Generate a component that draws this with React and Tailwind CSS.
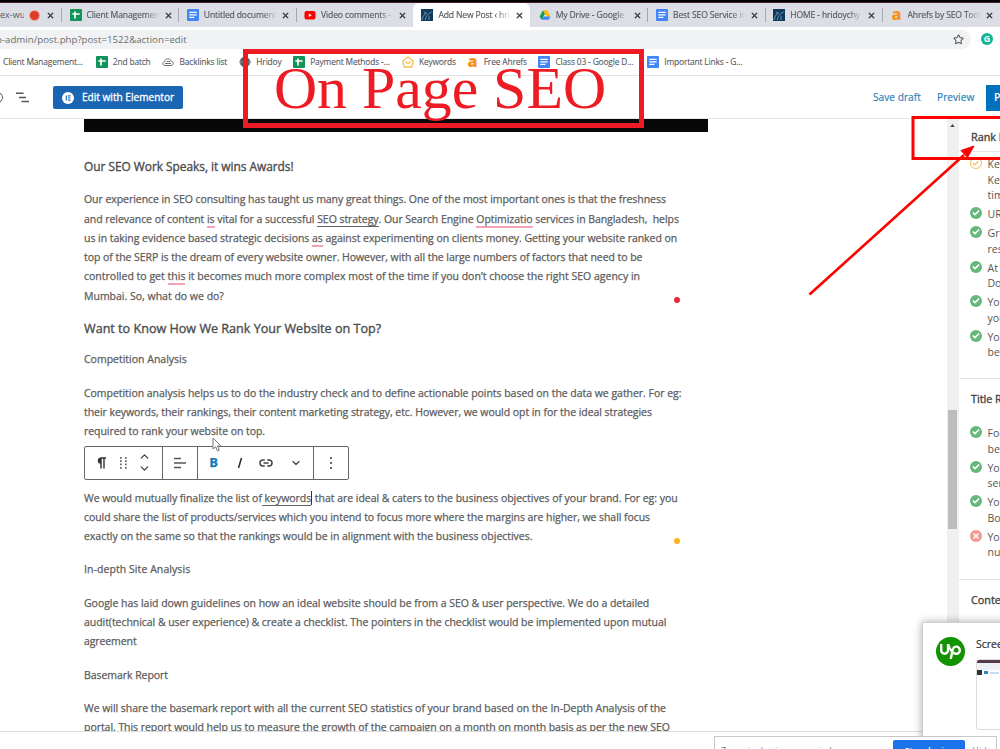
import React from 'react';
import { X, Star, ChevronUp, ChevronDown, Check, Globe } from 'lucide-react';
import { SiUpwork } from 'react-icons/si';

const SheetIcon = () => (
  <svg viewBox="0 0 12 12" className="w-3 h-3 shrink-0">
    <rect width="12" height="12" rx="1" fill="#10945a" />
    <path d="M5 2.5v7M2.3 5h7.4" stroke="#fff" strokeWidth="1.7" />
  </svg>
);

const DocIcon = () => (
  <svg viewBox="0 0 12 12" className="w-3 h-3 shrink-0">
    <rect width="12" height="12" rx="1" fill="#4285f4" />
    <path d="M2.3 3.3h7.4M2.3 5.8h7.4M2.3 8.4h5" stroke="#fff" strokeWidth="1.2" />
  </svg>
);

const YoutubeIcon = () => (
  <svg viewBox="0 0 12 12" className="w-3 h-3 shrink-0">
    <rect x="0.5" y="2" width="11" height="8.4" rx="2" fill="#f00" />
    <path d="M4.8 4.4v3.6l3-1.8z" fill="#fff" />
  </svg>
);

const SiteIcon = () => (
  <svg viewBox="0 0 12 12" className="w-3 h-3 shrink-0">
    <rect width="12" height="12" fill="#123a5c" />
    <path d="M1 11c1-4 2-6 5-7M4.5 11c0-3 2-6 6-8M3 4l2-1M8 11V7" stroke="#6fa0bd" strokeWidth="0.9" fill="none" />
  </svg>
);

const DriveIcon = () => (
  <svg viewBox="0 0 12 12" className="w-3 h-3 shrink-0">
    <path d="M4 1.2L.6 7.4l1.9 3.3L6 4.6z" fill="#0f9d58" />
    <path d="M4 1.2h4l3.5 6.2h-4z" fill="#fbbc04" />
    <path d="M2.5 10.7l1.9-3.3h7.1l-1.9 3.3z" fill="#4285f4" />
  </svg>
);

const AhrefsIcon = () => (
  <span className="w-3 h-3 shrink-0 flex items-center justify-center font-['Open_Sans',sans-serif] font-extrabold text-[16px] leading-none text-[#f7931e] pb-[3px]">a</span>
);

const CloudIcon = () => (
  <svg viewBox="0 0 12 12" className="w-3 h-3 shrink-0" fill="none" stroke="#707070">
    <path d="M3 9.5C.2 9.4.2 6 2.6 5.6 3 2 8.5 2 9 5.2c3 .2 2.7 4.2.2 4.3z" />
    <path d="M3 7.5h6M4.5 5.6h3.5" />
  </svg>
);

const KeywordIcon = () => (
  <svg viewBox="0 0 12 12" className="w-3 h-3 shrink-0" fill="none" stroke="#f5c352" strokeWidth="1.3">
    <path d="M6 .9l5.1 3.9-1.3 6.2H2.2L.9 4.8z" strokeLinejoin="round" />
    <path d="M3.2 5.5L6 7.8l2.8-2.3" />
  </svg>
);

const tabs = [
  { icon: <SheetIcon />, title: 'Client Managemen' },
  { icon: <DocIcon />, title: 'Untitled document' },
  { icon: <YoutubeIcon />, title: 'Video comments -' },
  { icon: <SiteIcon />, title: 'Add New Post ‹ hri', active: true },
  { icon: <DriveIcon />, title: 'My Drive - Google' },
  { icon: <DocIcon />, title: 'Best SEO Service in' },
  { icon: <SiteIcon />, title: 'HOME - hridoychy' },
  { icon: <AhrefsIcon />, title: 'Ahrefs by SEO Tool' },
];

const bookmarks = [
  { icon: <SheetIcon />, title: '2nd batch', width: 'w-[38px]' },
  { icon: <CloudIcon />, title: 'Backlinks list', width: 'w-[48px]' },
  { icon: <Globe size={12} fill="#555" color="#888" />, title: 'Hridoy', width: 'w-[25px]' },
  { icon: <SheetIcon />, title: 'Payment Methods -...', width: 'w-[80px]' },
  { icon: <KeywordIcon />, title: 'Keywords', width: 'w-[36px]' },
  { icon: <AhrefsIcon />, title: 'Free Ahrefs', width: 'w-[43px]' },
  { icon: <DocIcon />, title: 'Class 03 - Google D...', width: 'w-[80px]' },
  { icon: <DocIcon />, title: 'Important Links - G...', width: 'w-[80px]' },
];

const rankChecks = [
  { status: 'warn', lines: ['Key', 'Key', 'tim'] },
  { status: 'ok', lines: ['UR'] },
  { status: 'ok', lines: ['Gre', 'res'] },
  { status: 'ok', lines: ['At', 'Do'] },
  { status: 'ok', lines: ['You', 'you'] },
  { status: 'ok', lines: ['You', 'be'] },
];

const titleChecks = [
  { status: 'ok', lines: ['Foc', 'be'] },
  { status: 'ok', lines: ['You', 'sen'] },
  { status: 'ok', lines: ['You', 'Boo'] },
  { status: 'bad', lines: ['You', 'nu'] },
];

const Tab = ({ icon, title, active }) => (
  <div className={`relative w-[117.3px] h-full shrink-0 flex items-center pl-[8.5px] ${active ? 'bg-white rounded-t-md' : ''}`}>
    {icon}
    <span className="ml-[5px] w-[73px] overflow-hidden whitespace-nowrap text-[8.6px] tracking-[-0.15px] text-[#55585d] [-webkit-text-stroke:0.15px] [mask-image:linear-gradient(to_right,#000_80%,transparent)]">{title}</span>
    <X size={9} strokeWidth={3.5} className="ml-[4px] text-[#3c4043]" />
  </div>
);

const Divider = () => <div className="w-px h-[14px] -mr-px bg-[#a5a8b0] shrink-0" />;

const StatusIcon = ({ status }) => {
  if (status === 'warn') {
    return (
      <span className="w-[12px] h-[12px] shrink-0 rounded-full border-[1.5px] border-[#f7b75a] flex items-center justify-center">
        <Check size={7} strokeWidth={4} className="text-[#f7b75a]" />
      </span>
    );
  }
  return (
    <span className={`w-[12px] h-[12px] shrink-0 rounded-full flex items-center justify-center ${status === 'ok' ? 'bg-[#66b77b]' : 'bg-[#f19a94]'}`}>
      {status === 'ok' ? <Check size={8} strokeWidth={5} className="text-white" /> : <X size={8} strokeWidth={5} className="text-white" />}
    </span>
  );
};

const CheckList = ({ items }) => (
  <ul className="flex flex-col gap-[3.4px] pl-[10.5px]">
    {items.map((item, i) => (
      <li key={i} className="flex gap-[6px] text-[10.5px] leading-[15.6px] text-[#555]">
        <StatusIcon status={item.status} />
        <div className="whitespace-nowrap">
          {item.lines.map((line, j) => <div key={j}>{line}</div>)}
        </div>
      </li>
    ))}
  </ul>
);

const PanelTitle = ({ children }) => (
  <h4 className="pl-[12px] pt-[11px] text-[10.8px] leading-[17px] text-[#444] [-webkit-text-stroke:0.35px] whitespace-nowrap">{children}</h4>
);

const Line = ({ className = 'tracking-[-0.05px]', children }) => (
  <div className={`whitespace-pre w-max ${className}`}>{children}</div>
);

const Flag = ({ children }) => <span className="border-b-2 border-[#f4a3b5]">{children}</span>;

const Toolbar = () => (
  <div className="mt-[4.5px] w-[264.5px] h-[34px] flex items-center border border-[#666] rounded-[2px] text-[#444] bg-white">
    <div className="w-[77.5px] h-full flex items-center border-r border-[#666] pl-[10px]">
      <svg viewBox="0 0 12 12" className="w-[12px] h-[12px]">
        <path d="M5.5 1H11M6 1v10.5M9 1v10.5" stroke="#333" strokeWidth="1.4" />
        <path d="M6 .4a3.2 3.2 0 0 0 0 6.4z" fill="#333" />
      </svg>
      <svg viewBox="0 0 8 12" className="w-[8px] h-[12px] ml-[13px]" fill="#666">
        <path d="M0 0h1.7v1.7H0zM5 0h1.7v1.7H5zM0 3.3h1.7v1.7H0zM5 3.3h1.7v1.7H5zM0 6.6h1.7v1.7H0zM5 6.6h1.7v1.7H5zM0 10h1.7v1.7H0zM5 10h1.7v1.7H5z" />
      </svg>
      <div className="ml-[10px] flex flex-col gap-[3px]">
        <ChevronUp size={13} strokeWidth={2.5} className="-my-[2px]" />
        <ChevronDown size={13} strokeWidth={2.5} className="-my-[2px]" />
      </div>
    </div>
    <div className="w-[35px] h-full flex items-center justify-center border-r border-[#666]">
      <svg viewBox="0 0 12 12" className="w-[12px] h-[12px]" stroke="#555" strokeWidth="1.5"><path d="M0 1.5h7M0 6h12M0 10.5h7" /></svg>
    </div>
    <div className="w-[116px] h-full flex items-center border-r border-[#666] pl-[11px]">
      <span className="w-[10px] text-center text-[13px] leading-none font-bold text-[#1277b5]">B</span>
      <svg viewBox="0 0 8 12" className="w-[8px] h-[12px] ml-[17px]" stroke="#333" strokeWidth="1.6"><path d="M5.5 1L2.5 11" /></svg>
      <svg viewBox="0 0 14 8" className="w-[14px] h-[8px] ml-[15px]" fill="none" stroke="#444" strokeWidth="1.5">
        <path d="M5.8 1H4a3 3 0 0 0 0 6h1.800M8.2 1H10a3 3 0 0 1 0 6H8.2M4.5 4h5" />
      </svg>
      <ChevronDown size={12} strokeWidth={2.5} className="ml-[17px]" />
    </div>
    <div className="flex-1 flex justify-center">
      <svg viewBox="0 0 2 12" className="w-[2px] h-[12px]" fill="#666"><path d="M0 0h2v2H0zM0 5h2v2H0zM0 10h2v2H0z" /></svg>
    </div>
  </div>
);

const Article = () => (
  <article className="pl-[84px] font-['Open_Sans',sans-serif] text-[10.5px] leading-[19.25px] text-[#5c5c5c] [-webkit-text-stroke:0.25px]">
    <div className="w-[624px] h-[13px] bg-[#080808]" />
    <h3 className="mt-[25px] text-[11.9px] text-[#4c4c4c] [-webkit-text-stroke:0.35px]">
      <Line className="tracking-[-0.02px]">Our SEO Work Speaks, it wins Awards!</Line>
    </h3>
    <div className="mt-[14.2px]">
      <Line>Our experience in SEO consulting has taught us many great things. One of the most important ones is that the freshness</Line>
      <Line>and relevance of content <Flag>is</Flag> vital for a successful <span className="border-b border-[#666]">SEO strategy</span>. Our Search Engine <Flag>Optimizatio</Flag> services in Bangladesh,  helps</Line>
      <Line className="tracking-[-0.04px]">us in taking evidence based strategic decisions <Flag>as</Flag> against experimenting on clients money. Getting your website ranked on</Line>
      <Line>top of the SERP is the dream of every website owner. However, with all the large numbers of factors that need to be</Line>
      <Line className="tracking-[0.01px]">controlled to get <Flag>this</Flag> it becomes much more complex most of the time if you don’t choose the right SEO agency in</Line>
      <div className="flex items-center w-[596px]">
        <Line className="tracking-normal">Mumbai. So, what do we do?</Line>
        <span className="ml-auto mt-[8px] w-[6px] h-[6px] rounded-full bg-[#ec2a3b]" />
      </div>
    </div>
    <h2 className="mt-[13px] text-[12.6px] text-[#4c4c4c] [-webkit-text-stroke:0.35px]">
      <Line className="tracking-normal">Want to Know How We Rank Your Website on Top?</Line>
    </h2>
    <div className="mt-[12px]"><Line className="tracking-normal">Competition Analysis</Line></div>
    <div className="mt-[14.2px]">
      <Line className="tracking-[-0.035px]">Competition analysis helps us to do the industry check and to define actionable points based on the data we gather. For eg:</Line>
      <Line>their keywords, their rankings, their content marketing strategy, etc. However, we would opt in for the ideal strategies</Line>
      <Line>required to rank your website on top.</Line>
    </div>
    <Toolbar />
    <div className="mt-[8.7px]">
      <Line className="tracking-[-0.035px]">We would mutually finalize the list of<span className="border-b border-[#666]"> keywords</span><span className="border-l border-[#333]"> that are ideal &amp; caters to the business objectives of your brand. For eg: you</span></Line>
      <Line className="tracking-[-0.06px]">could share the list of products/services which you intend to focus more where the margins are higher, we shall focus</Line>
      <div className="flex items-center w-[596px]">
        <Line className="tracking-[-0.03px]">exactly on the same so that the rankings would be in alignment with the business objectives.</Line>
        <span className="ml-auto mt-[8px] w-[6px] h-[6px] rounded-full bg-[#fab41d]" />
      </div>
    </div>
    <div className="mt-[14px]"><Line className="tracking-[0.07px]">In-depth Site Analysis</Line></div>
    <div className="mt-[14.2px]">
      <Line className="tracking-[-0.025px]">Google has laid down guidelines on how an ideal website should be from a SEO &amp; user perspective. We do a detailed</Line>
      <Line className="tracking-[-0.045px]">audit(technical &amp; user experience) &amp; create a checklist. The pointers in the checklist would be implemented upon mutual</Line>
      <Line className="tracking-[-0.1px]">agreement</Line>
    </div>
    <div className="mt-[14.2px]"><Line>Basemark Report</Line></div>
    <div className="mt-[14.2px]">
      <Line className="tracking-[-0.04px]">We will share the basemark report with all the current SEO statistics of your brand based on the In-Depth Analysis of the</Line>
      <Line className="tracking-[-0.045px]">portal. This report would help us to measure the growth of the campaign on a month on month basis as per the new SEO</Line>
    </div>
  </article>
);

const App = () => {
  return (
    <div className="relative w-[1000px] h-[749px] overflow-hidden bg-white font-['Open_Sans',sans-serif] flex flex-col">
      <div className="h-[3px] bg-black border-b border-[#4a1c33] shrink-0" />

      <div className="h-[24px] shrink-0 bg-[#dcdee6] flex items-center">
        <div className="w-[61px] shrink-0 flex items-center text-[9px] text-[#55585d] whitespace-nowrap">
          <span className="w-[24px] overflow-hidden shrink-0">ex-wu</span>
          <span className="ml-[6px] w-[9px] h-[9px] rounded-full bg-[#dd3e2a] ring-1 ring-[#eaa69c] shrink-0" />
          <X size={9} strokeWidth={3.5} className="ml-[7px] text-[#3c4043] shrink-0" />
        </div>
        {tabs.map((tab, i) => (
          <React.Fragment key={tab.title}>
            {i !== 3 && i !== 4 && <Divider />}
            <Tab {...tab} />
          </React.Fragment>
        ))}
      </div>

      <div className="h-[23px] shrink-0 flex items-center">
        <div className="w-[971px] h-[19px] mt-[2px] rounded-r-full bg-[#f0f2f4] flex items-center justify-between pr-[7px] text-[9.7px] text-[#6b6e72]">
          <span className="whitespace-nowrap -ml-[4px] mt-[1px]">p-admin/post.php?post=1522&amp;action=edit</span>
          <Star size={11} strokeWidth={2.2} className="text-[#555]" />
        </div>
        <div className="ml-[10px] w-[12px] h-[12px] rounded-full bg-[#15b392] text-white text-[9px] leading-[12px] font-bold text-center">G</div>
      </div>

      <div className="h-[26px] shrink-0 border-b border-[#e4e4e6] flex items-center gap-[11.6px] text-[8.4px] tracking-[-0.15px] text-[#55585d] [-webkit-text-stroke:0.1px]">
        <span className="pl-[3px] w-[84px] shrink-0 whitespace-nowrap">Client Management...</span>
        {bookmarks.map((b) => (
          <div key={b.title} className="flex items-center gap-[5.2px] shrink-0">
            {b.icon}
            <span className={`whitespace-nowrap ${b.width}`}>{b.title}</span>
          </div>
        ))}
      </div>

      <div className="h-[43px] shrink-0 border-b border-[#e6e6e6] flex items-center pt-[1px] text-[10.5px]">
        <span className="-ml-[8px] w-[11px] h-[11px] shrink-0 rounded-full border-[1.5px] border-[#555]" />
        <svg viewBox="0 0 13 11" className="ml-[13px] w-[13px] h-[11px] shrink-0" stroke="#555" strokeWidth="1.5"><path d="M0 1.2h7.5M3 5.4h7M5.5 9.6H13" /></svg>
        <div className="ml-[24px] w-[130px] h-[23px] shrink-0 rounded-[2px] bg-[#1b66b3] text-white flex items-center pl-[9px]">
          <svg viewBox="0 0 12 12" className="w-[12px] h-[12px] shrink-0"><circle cx="6" cy="6" r="6" fill="#fff" /><path d="M4.3 3.5v5M6 3.9h2.5M6 6h2.500M6 8.1h2.5" stroke="#1b66b3" strokeWidth="1.1" /></svg>
          <span className="ml-[8px] whitespace-nowrap text-[10.1px] [-webkit-text-stroke:0.3px]">Edit with Elementor</span>
        </div>
        <span className="ml-[690px] w-[48px] shrink-0 whitespace-nowrap text-[10.2px] text-[#2a7fb8] [-webkit-text-stroke:0.15px]">Save draft</span>
        <span className="ml-[16px] w-[37px] shrink-0 text-[10.2px] text-[#2a7fb8] [-webkit-text-stroke:0.15px]">Preview</span>
        <div className="ml-[12px] w-[50px] shrink-0 h-[26px] bg-[#0071bd] text-white font-semibold flex items-center pl-[8px]">P</div>
      </div>

      <div className="h-[613px] shrink-0 overflow-hidden border-b border-[#dcdcdc] flex">
        <main className="w-[947px] shrink-0"><Article /></main>
        <div className="w-[12px] shrink-0 bg-[#f0f0f0] flex flex-col items-center pr-[2px]">
          <svg viewBox="0 0 6 4" className="mt-[5px] w-[5px] h-[3px]"><path d="M3 0l3 4H0z" fill="#444" /></svg>
          <div className="mt-[283px] w-[9px] h-[119px] bg-[#bdbdbd]" />
        </div>
        <aside className="w-[200px] shrink-0">
          <div className="h-[35px] -mt-[2px] border-b border-[#e6e6e6]"><PanelTitle>Rank M</PanelTitle></div>
          <div className="h-[227px] pt-[5px] border-b border-[#e2e2e2]"><CheckList items={rankChecks} /></div>
          <PanelTitle>Title R</PanelTitle>
          <div className="h-[173px] pt-[19px] border-b border-[#e2e2e2]"><CheckList items={titleChecks} /></div>
          <PanelTitle>Conte</PanelTitle>
        </aside>
      </div>

      {/* mouse pointer over the text */}
      <svg viewBox="0 0 10 15" className="absolute left-[212px] top-[437px] w-[10px] h-[15px]"><path d="M1 1v11l2.6-2.3L5.5 14l1.8-.9-1.8-4H9z" fill="#fff" stroke="#777" /></svg>

      {/* desktop notification */}
      <div className="absolute left-[922px] top-[622px] w-[200px] h-[127px] bg-white border-l border-t border-[#d0d0d0] shadow-[0_0_8px_rgba(0,0,0,0.35)] flex pl-[13px] pt-[14px]">
        <div className="w-[29px] h-[29px] rounded-full bg-[#129400] flex items-center justify-center"><SiUpwork size={21} color="#fff" /></div>
        <div className="ml-[11px]">
          <div className="text-[10.5px] leading-[14px] text-[#333] [-webkit-text-stroke:0.2px]">Scree</div>
          <div className="mt-[8px] w-[120px] h-[71px] rounded-[3px] border border-[#ddd] overflow-hidden">
            <div className="h-[3px] bg-[#573a4c]" />
            <div className="h-[7px] bg-[#edf0f4]" />
            <div className="flex items-center gap-[2px]"><span className="w-[5px] h-[5px] bg-[#333]" /><span className="w-[4px] h-[3px] bg-[#2a8ac4]" /><span className="w-[9px] h-[2px] bg-[#c6dcee]" /></div>
          </div>
        </div>
      </div>

      <div className="absolute left-[714px] top-[736px] w-[283px] h-[40px] bg-white border border-[#c8c8c8] flex text-[9px] text-[#777]">
        <span className="pl-[6px] pt-[7px] w-[178px] whitespace-nowrap">Zoom is sharing your window.</span>
        <span className="mt-[3px] w-[72px] h-[24px] rounded-[2px] bg-[#1a73e8] text-white font-semibold text-[8px] text-center leading-[21px]">Stop sharing</span>
        <span className="ml-[7px] pt-[7px] text-[#5b93dc]">Hide</span>
      </div>

      {/* annotations drawn over the window */}
      <div className="absolute left-[243px] top-[49px] w-[401px] h-[79px] border-[5px] border-[#ed1c24] flex justify-center font-['Liberation_Serif',serif] text-[59.8px] leading-[69px] text-[#ed1c24] whitespace-nowrap">
        <span className="-ml-[7px]">On Page SEO</span>
      </div>
      <svg viewBox="800 110 200 190" className="absolute left-[800px] top-[110px] w-[200px] h-[190px]">
        <path d="M1010 117.5H913v41h97" fill="none" stroke="#f00" strokeWidth="3" />
        <path d="M809.5 294.5L964 155" stroke="#f00" strokeWidth="2.6" />
        <path d="M974 146l-13 4.5 6.5 7z" fill="#f00" stroke="#f00" />
      </svg>
    </div>
  );
};

export default App;
